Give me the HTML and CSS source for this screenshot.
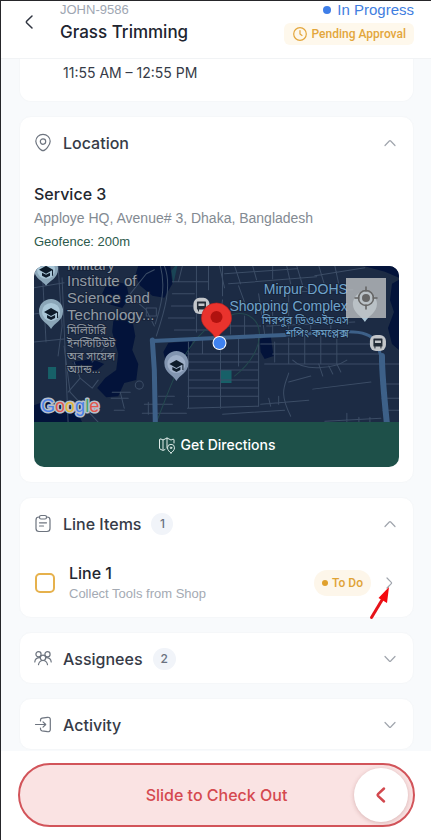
FILE: index.html
```
<!DOCTYPE html>
<html lang="en">
<head>
    <meta charset="UTF-8">
    <meta name="viewport" content="width=device-width, initial-scale=1.0">
    <title>Grass Trimming</title>
    <link rel="stylesheet" href="styles.css">
</head>
<body>
    <header class="topbar">
        <button class="back" aria-label="Back">
            <svg width="24" height="24" viewBox="0 0 24 24"><path d="M15 6 L9.6 11.3 Q9 12 9.6 12.7 L15 18"/></svg>
        </button>
        <div class="job">
            <div class="job-id">JOHN-9586</div>
            <h1>Grass Trimming</h1>
        </div>
        <div class="job-status">
            <div class="progress"><span class="dot"></span>In Progress</div>
            <div class="approval">
                <svg width="16" height="16" viewBox="0 0 16 16"><circle cx="8" cy="8" r="6.3"/><path d="M8 4.5 V8 L10 9.5"/></svg>
                Pending Approval
            </div>
        </div>
    </header>

    <main>
        <section class="card schedule">11:55 AM – 12:55 PM</section>

        <section class="card">
            <button class="card-head" aria-expanded="true">
                <svg class="icon" width="20" height="20" viewBox="0 0 20 20"><path d="M10 17.7 C8 17.7 2.8 12.4 2.8 8.2 A7.2 6.9 0 0 1 17.2 8.2 C17.2 12.4 12 17.7 10 17.7 Z"/><circle cx="10" cy="8.6" r="2.7"/></svg>
                <span>Location</span>
                <svg class="chevron" width="14" height="14" viewBox="0 0 14 14"><path d="M2 9.5 L6.3 5 Q7 4.3 7.7 5 L12 9.5"/></svg>
            </button>
            <div class="location">
                <h2>Service 3</h2>
                <p class="address">Apploye HQ, Avenue# 3, Dhaka, Bangladesh</p>
                <p class="geofence">Geofence: 200m</p>
                <div class="map-box">
                    <div class="map">
                        <svg class="map-art" viewBox="0 0 364 156" preserveAspectRatio="xMidYMid slice">
                            <rect width="364" height="156" fill="#1c2b44"/>
                            <!-- water -->
                            <g fill="#03133a">
                                <path d="M104 0 H136 L138 18 L130 32 L118 30 L106 20 L101 10 Z"/>
                                <path d="M74 15 L92 18 L95 32 L88 42 L74 38 L68 28 Z"/>
                                <path d="M80 46 L97 48 L101 70 L98 84 L104 98 L102 114 L90 117 L84 130 L72 131 L63 122 L71 112 L82 104 L84 88 L78 66 Z"/>
                                <path d="M0 139 L14 134 L28 138 L42 143 L48 156 H0 Z"/>
                                <path d="M38 96 L58 93 L70 98 L63 104 L48 106 Z"/>
                                <path d="M134 77 L158 75 L154 88 L146 100 L132 98 L129 86 Z"/>
                                <path d="M225 73 L236 70 L239 90 L230 93 L226 86 Z"/>
                                <path d="M357 18 L364 14 V84 L357 78 L353 62 L359 46 L355 34 Z"/>
                                <path d="M328 0 H364 V12 L350 6 Z"/>
                            </g>
                            <g fill="#176068">
                                <path d="M14 101 H22 V113 H14 Z"/>
                                <path d="M186 104 H197 V117 H186 Z"/>
                                <path d="M137 5 L141 0 H143 L139 18 Z" opacity=".5"/>
                            </g>
                            <!-- side streets -->
                            <g fill="none" stroke="#3c4d66" stroke-width="1">
                                <path d="M8 0 L12 76 M24 0 L28 60 L24 90 M0 48 L28 44 M0 76 L30 73 M28 12 L34 156 M0 22 L30 17"/>
                                <path d="M30 80 L36 126 L64 156 M34 126 L46 112 L58 122 L64 114 M46 112 L40 96 M58 96 L72 80"/>
                                <path d="M126 0 C132 22 126 42 121 58 M130 0 C138 20 130 46 122 70 M96 28 L112 8 L120 4 M98 32 L112 44 L120 60 M112 42 H122 V50 H112 Z"/>
                                <path d="M138 16 H174 M138 28 H160 M137 40 H160 M134 52 H160 M148 0 L144 16 M162 0 V66 M174 0 V24 M188 0 V30 M140 64 H174"/>
                                <path d="M185 0 L190 22 M200 0 L206 18 M218 0 L222 14 M238 0 V13 M252 0 L256 18 M190 8 L262 3 M194 18 L282 11 M262 0 L268 20 L280 28"/>
                                <path d="M284 0 L290 20 M300 0 L306 28 M280 10 L330 2 M264 26 L318 24 M204 20 L212 42 M224 28 L230 68"/>
                                <path d="M188 34 L184 66 M196 40 V68 M210 50 V69 M178 60 H226 M232 60 L320 56 M238 34 V68 M254 20 V68 M276 54 V68 M296 54 V68"/>
                                <path d="M153 88 H224 M153 96 H224 M154 104 H224 M155 114 H224 M154 122 H224 M153 130 H224 M154 76 V142 M168 74 V88 M186 72 V142 M204 72 V100 M224 72 V140 M153 142 L224 140"/>
                                <path d="M240 76 V96 M254 72 V98 M270 70 V98 M286 68 V98 M302 68 V98 M226 78 H342 M238 88 H344 M230 98 H348"/>
                                <path d="M258 94 C270 106 300 102 312 94 M284 98 L288 110 M294 100 L298 108 M302 98 L306 106"/>
                                <path d="M254 107 C250 120 244 126 256 150 M254 116 L276 110 M226 138 L274 134 M278 123 L336 116 M234 132 L236 140 M244 130 V138 M188 148 L250 144"/>
                                <path d="M290 155 L346 152 M312 147 V156 M324 151 V156 M335 151 V156 M346 118 H364 M347 132 H364 M348 144 H364 M346 98 H364"/>
                                <path d="M78 126 H96 M77 132 H94 M80 144 H90 M86 126 L90 142 M110 138 H138 M108 147 H152 M114 136 V148 M124 130 H140"/>
                                <circle cx="105" cy="119" r="4"/>
                                <path d="M122 156 C138 118 152 60 200 48 C230 44 236 82 200 110" stroke="#24494f"/>
                            </g>
                            <!-- main roads -->
                            <g fill="none" stroke="#3d6088" stroke-linejoin="round">
                                <path d="M118 75 L182 72 L250 69" stroke-width="4"/>
                                <path d="M250 69 L306 66 Q334 64 341 76 Q347 86 347 108 L352 158" stroke-width="3"/>
                                <path d="M347 90 Q347 110 352 158" stroke-width="6"/>
                                <path d="M118 74 L120 104 L121 158" stroke-width="5"/>
                            </g>
                            <!-- school markers -->
                            <g>
                                <g transform="translate(12 6)"><path d="M0 14 C-3 9 -12 7 -12 -3 A12 12 0 0 1 12 -3 C12 7 3 9 0 14 Z" fill="#8ba6b8"/><circle cy="-2" r="9" fill="#a9c6d7"/><path d="M-7 -2 L0 -6 L7 -2 L0 2 Z M-4 1 V4 L0 6 L4 4 V1 L0 3 Z M6 -2 H7 V4 H6 Z" fill="#0d1b2a"/></g>
                                <g transform="translate(17 48)"><path d="M0 15 C-3 9 -12 7 -12 -3 A12 12 0 0 1 12 -3 C12 7 3 9 0 15 Z" fill="#8ba6b8"/><circle cy="-2" r="9" fill="#a9c6d7"/><path d="M-7 -2 L0 -6 L7 -2 L0 2 Z M-4 1 V4 L0 6 L4 4 V1 L0 3 Z M6 -2 H7 V4 H6 Z" fill="#0d1b2a"/></g>
                                <g transform="translate(142 100)"><path d="M0 15 C-3 9 -12 7 -12 -3 A12 12 0 0 1 12 -3 C12 7 3 9 0 15 Z" fill="#8295b0"/><circle cy="-2" r="9" fill="#9fb0c9"/><path d="M-7 -2 L0 -6 L7 -2 L0 2 Z M-4 1 V4 L0 6 L4 4 V1 L0 3 Z M6 -2 H7 V4 H6 Z" fill="#0d1b2a"/></g>
                            </g>
                            <!-- bus stops -->
                            <g transform="translate(167 40)"><rect x="-8" y="-8" width="16" height="16" rx="6" fill="#c3c6ca"/><path d="M-4 -4 H4 V3 H-4 Z M-3 3 V5 M3 3 V5" fill="#222b36" stroke="#222b36"/><path d="M-3 -2.5 H3 V0 H-3 Z" fill="#c3c6ca"/></g>
                            <g transform="translate(343 77)"><rect x="-8" y="-8" width="16" height="16" rx="6" fill="#c3c6ca"/><path d="M-4 -4 H4 V3 H-4 Z M-3 3 V5 M3 3 V5" fill="#222b36" stroke="#222b36"/><path d="M-3 -2.5 H3 V0 H-3 Z" fill="#c3c6ca"/></g>
                            <g class="place">
                                <text x="33" y="4">Military</text>
                                <text x="33" y="20">Institute of</text>
                                <text x="33" y="37">Science and</text>
                                <text x="33" y="54">Technology...</text>
                                <text class="bn" x="33" y="68">মিলিটারি</text>
                                <text class="bn" x="33" y="81">ইনস্টিটিউট</text>
                                <text class="bn" x="33" y="94">অব সায়েন্স</text>
                                <text class="bn" x="33" y="107">অ্যান্ড...</text>
                            </g>
                            <g class="place shop">
                                <text x="313" y="28">Mirpur DOHS</text>
                                <text x="313" y="45">Shopping Complex</text>
                                <text class="bn" x="314" y="58">মিরপুর ডিওএইচএস</text>
                                <text class="bn" x="314" y="71">শপিং কমপ্লেক্স</text>
                            </g>
                            <!-- job site pin -->
                            <path d="M182 75 C179 64 167 63 167 52 A15 15 0 0 1 197 52 C197 63 185 64 182 75 Z" fill="#e9332d" stroke="#b9201d" stroke-width=".6"/>
                            <circle cx="182" cy="51" r="6" fill="#b1120f"/>
                            <circle cx="185" cy="77" r="7" fill="#fff"/>
                            <circle cx="185" cy="77" r="6" fill="#3f82f0"/>
                            <path d="M330 56 C327 50 318 47 318 38 A12 12 0 0 1 342 38 C342 47 333 50 330 56 Z" fill="#a9c3d4"/>
                            <g class="google">
                                <text x="7" y="146"><tspan fill="#4a80e8">G</tspan><tspan fill="#e2574c">o</tspan><tspan fill="#e8b934">o</tspan><tspan fill="#4a80e8">g</tspan><tspan fill="#43a566">l</tspan><tspan fill="#e2574c">e</tspan></text>
                            </g>
                        </svg>
                        <button class="locate" aria-label="My location">
                            <svg width="24" height="24" viewBox="0 0 24 24"><circle cx="12" cy="12" r="7.5"/><path d="M12 1 V5 M12 19 V23 M1 12 H5 M19 12 H23"/><circle class="fill" cx="12" cy="12" r="4"/></svg>
                        </button>
                    </div>
                    <button class="directions">
                        <svg width="18" height="18" viewBox="0 0 18 18"><path d="M7 13.5 L5.5 14.3 Q5 14.5 4.5 14.3 L2 13 Q1.5 12.7 1.5 12 V4 Q1.5 2.5 3 3 L5 4 L9 2 L13 4 L15 3.2 Q16 3 16 4 V7 M5 4 V14 M9 2 V12"/><path d="M13 17 C11.5 16 9.5 14 9.5 11.8 A3.5 3.5 0 0 1 16.5 11.8 C16.5 14 14.5 16 13 17 Z"/><circle cx="13" cy="11.8" r=".8"/></svg>
                        Get Directions
                    </button>
                </div>
            </div>
        </section>

        <section class="card">
            <button class="card-head" aria-expanded="true">
                <svg class="icon" width="20" height="20" viewBox="0 0 20 20"><path d="M6.5 3 H6 Q3 3 3 6 V14.5 Q3 17.5 6 17.5 H14 Q17 17.5 17 14.5 V6 Q17 3 14 3 H13.5"/><rect x="6.5" y="1.5" width="7" height="3.5" rx="1.5"/><path d="M6.5 8.8 H13.5 M6.5 12 H10.5"/></svg>
                <span>Line Items</span>
                <span class="count">1</span>
                <svg class="chevron" width="14" height="14" viewBox="0 0 14 14"><path d="M2 9.5 L6.3 5 Q7 4.3 7.7 5 L12 9.5"/></svg>
            </button>
            <div class="line">
                <input type="checkbox" id="line1">
                <label for="line1">
                    <span class="line-name">Line 1</span>
                    <span class="line-desc">Collect Tools from Shop</span>
                </label>
                <span class="todo"><span class="dot"></span>To Do</span>
                <a class="open" href="#line1" aria-label="Open Line 1">
                    <svg class="chevron" width="14" height="14" viewBox="0 0 14 14"><path d="M4 2 L8.3 6.3 Q9 7 8.3 7.7 L4 12"/></svg>
                    <svg class="pointer" width="22" height="34" viewBox="0 0 22 34"><path d="M2.5 31.5 L13 14" stroke="#e6141a" stroke-width="3" stroke-linecap="round"/><path d="M20 1 L9.5 12 L13 14 L18 17 Z" fill="#f5080e"/></svg>
                </a>
            </div>
        </section>

        <section class="card">
            <button class="card-head" aria-expanded="false">
                <svg class="icon" width="20" height="20" viewBox="0 0 20 20"><circle cx="5.5" cy="5.3" r="2.6"/><circle cx="14.5" cy="5.3" r="2.6"/><circle cx="10" cy="8.8" r="2.7"/><path d="M1.8 13 C2 10.5 3.5 8.7 6.8 8.7 M18.2 13 C18 10.5 16.5 8.7 13.2 8.7 M5.5 15.7 C6 12.8 7.5 11.5 10 11.5 C12.5 11.5 14 12.8 14.5 15.7"/></svg>
                <span>Assignees</span>
                <span class="count">2</span>
                <svg class="chevron" width="14" height="14" viewBox="0 0 14 14"><path d="M2 4.5 L6.3 9 Q7 9.7 7.7 9 L12 4.5"/></svg>
            </button>
        </section>

        <section class="card">
            <button class="card-head" aria-expanded="false">
                <svg class="icon" width="20" height="20" viewBox="0 0 20 20"><path d="M7.5 6 V5 Q7.5 3.6 9 3.2 L14.5 2.3 Q17.3 2 17.3 4.5 V14.5 Q17.3 17 14.5 16.7 L9 15.8 Q7.5 15.4 7.5 14 V13 M2.5 9.5 H12.5 M10 6.8 L12.7 9.5 L10 12.2"/></svg>
                <span>Activity</span>
                <svg class="chevron" width="14" height="14" viewBox="0 0 14 14"><path d="M2 4.5 L6.3 9 Q7 9.7 7.7 9 L12 4.5"/></svg>
            </button>
        </section>
    </main>

    <footer>
        <button class="slide">
            <span class="slide-text">Slide to Check Out</span>
            <span class="knob">
                <svg width="20" height="20" viewBox="0 0 20 20"><path d="M13 3.5 L7 9.2 Q6.2 10 7 10.8 L13 16.5"/></svg>
            </span>
        </button>
    </footer>
</body>
</html>
```
FILE: styles.css
```
* {
    box-sizing: border-box;
}
body {
    margin: 0;
    min-height: 100vh;
    display: flex;
    flex-direction: column;
    font-family: Inter, "Liberation Sans", sans-serif;
    color: #363b47;
    background: #f8fafc;
    border-left: 1px solid #26262a;
    border-top: 1px solid #26262a;
}
h1, h2, p {
    margin: 0;
}
button {
    font-family: inherit;
    color: inherit;
    border: none;
    background: none;
    padding: 0;
    cursor: pointer;
}
svg {
    display: block;
    flex: none;
    fill: none;
    stroke-linecap: round;
    stroke-linejoin: round;
}

/* header */
.topbar {
    display: flex;
    height: 58px;
    padding-right: 17px;
    background: #fff;
    border-bottom: 1px solid #f1f3f5;
}
.back {
    width: 24px;
    height: 24px;
    margin: 9px 19px 0 16px;
}
.back svg {
    stroke: #2f3440;
    stroke-width: 1.5;
}
.job {
    flex: 1;
}
.job-id {
    font-family: "Liberation Sans", sans-serif;
    font-size: 13px;
    line-height: 18px;
    color: #9ea6b2;
}
h1 {
    font-size: 17px;
    font-weight: 500;
    line-height: 27px;
    color: #20242f;
}
.job-status {
    display: flex;
    flex-direction: column;
    align-items: flex-end;
    gap: 4px;
}
.progress {
    display: flex;
    align-items: center;
    gap: 6px;
    font-family: "Liberation Sans", sans-serif;
    font-size: 15px;
    line-height: 18px;
    color: #3f7ee0;
}
.dot {
    width: 8px;
    height: 8px;
    border-radius: 50%;
    background: #3f7ee8;
}
.approval {
    display: flex;
    align-items: center;
    gap: 3px;
    padding: 0 8px;
    font-family: Roboto, sans-serif;
    font-size: 12px;
    font-weight: 500;
    line-height: 22px;
    color: #e3a63c;
    background: #fef8ec;
    border-radius: 6px;
}
.approval svg {
    stroke: #e3a63c;
    stroke-width: 1.2;
}

/* cards */
main {
    flex: 1;
    display: flex;
    flex-direction: column;
    gap: 14px;
    padding: 0 17px 0 18px;
}
.card {
    background: #fff;
    border: 1px solid #f5f7f9;
    border-radius: 12px;
}
.schedule {
    height: 43px;
    padding: 3px 43px;
    border-top: none;
    border-radius: 0 0 12px 12px;
    font-size: 14px;
    line-height: 22px;
}
.card-head {
    display: flex;
    align-items: center;
    width: 100%;
    height: 50px;
    padding: 2px 16px 0 13px;
    font-size: 16px;
    font-weight: 500;
    text-align: left;
}
.icon {
    margin-right: 10px;
    stroke: #6d747f;
    stroke-width: 1.2;
}
.chevron {
    margin-left: auto;
    stroke: #a0a5ad;
    stroke-width: 1.2;
}
.count {
    min-width: 22px;
    margin-left: 10px;
    padding: 0 8px;
    border-radius: 11px;
    background: #f1f4f9;
    color: #6a7280;
    font-size: 12px;
    line-height: 22px;
    text-align: center;
}

/* location */
.location {
    padding: 15px 14px 15px;
}
h2 {
    font-size: 16px;
    font-weight: 500;
    line-height: 24px;
    color: #23272f;
}
.address,
.geofence {
    font-family: "Liberation Sans", sans-serif;
    line-height: 24px;
}
.address {
    font-size: 14px;
    color: #838a92;
}
.geofence {
    font-size: 13px;
    color: #2c5a4c;
}
.map-box {
    margin-top: 12px;
    border-radius: 10px;
    overflow: hidden;
}
.map {
    position: relative;
    height: 156px;
}
.map-art {
    width: 100%;
    height: 100%;
}
.place text {
    font-family: "Liberation Sans", sans-serif;
    font-size: 15px;
    fill: #939ba4;
    stroke: #17233a;
    stroke-width: 2px;
    paint-order: stroke;
}
.shop text {
    font-size: 14px;
    fill: #6fa3cb;
    text-anchor: end;
}
.place .bn {
    font-family: "Noto Sans Bengali", "Noto Sans", sans-serif;
    font-size: 11px;
}
.google text {
    font-family: "Liberation Sans", sans-serif;
    font-size: 18px;
    stroke: #b8c0cc;
    stroke-width: 3px;
    paint-order: stroke;
}
.locate {
    position: absolute;
    top: 12px;
    right: 13px;
    width: 40px;
    height: 40px;
    display: flex;
    align-items: center;
    justify-content: center;
    background: rgba(190, 192, 194, 0.8);
}
.locate svg {
    stroke: #666;
    stroke-width: 1.6;
}
.locate .fill {
    fill: #666;
    stroke: none;
}
.directions {
    display: flex;
    align-items: center;
    justify-content: center;
    gap: 5px;
    width: 100%;
    height: 45px;
    background: #1e5049;
    color: #fff;
    font-size: 14px;
    font-weight: 500;
}
.directions svg {
    stroke: #dfebe8;
    stroke-width: 1;
}

/* line items */
.line {
    display: flex;
    align-items: center;
    padding: 14px 16px 13px 15px;
}
.line input {
    appearance: none;
    width: 20px;
    height: 20px;
    margin: 0 14px 0 0;
    border: 2px solid #e6b14c;
    border-radius: 5px;
}
.line label {
    flex: 1;
}
.line-name,
.line-desc {
    display: block;
}
.line-name {
    font-size: 16px;
    font-weight: 500;
    line-height: 22px;
    color: #23262f;
}
.line-desc {
    font-family: "Liberation Sans", sans-serif;
    font-size: 13px;
    line-height: 20px;
    color: #a4aab3;
}
.todo {
    display: flex;
    align-items: center;
    gap: 4px;
    padding: 0 8px;
    border-radius: 13px;
    background: #fdf6ea;
    color: #e0a336;
    font-family: Roboto, sans-serif;
    font-size: 12px;
    font-weight: 500;
    line-height: 26px;
}
.todo .dot {
    width: 6px;
    height: 6px;
    background: #e0a02c;
}
.open {
    position: relative;
    margin-left: 12px;
}
.pointer {
    position: absolute;
    top: 10px;
    left: -14px;
}

/* check out slider */
footer {
    padding: 12px 16px 13px 17px;
    background: #fff;
}
.slide {
    display: flex;
    align-items: center;
    position: relative;
    width: 100%;
    height: 64px;
    border: 2px solid #d2545a;
    border-radius: 32px;
    background: #fae3e3;
}
.slide-text {
    flex: 1;
    font-size: 16px;
    font-weight: 500;
    color: #d5494f;
}
.knob {
    position: absolute;
    right: 5px;
    display: flex;
    align-items: center;
    justify-content: center;
    width: 54px;
    height: 54px;
    border-radius: 50%;
    background: #fff;
    box-shadow: 0 1px 4px rgba(120, 40, 40, 0.25);
}
.knob svg {
    stroke: #d2484e;
    stroke-width: 2.5;
}
```
